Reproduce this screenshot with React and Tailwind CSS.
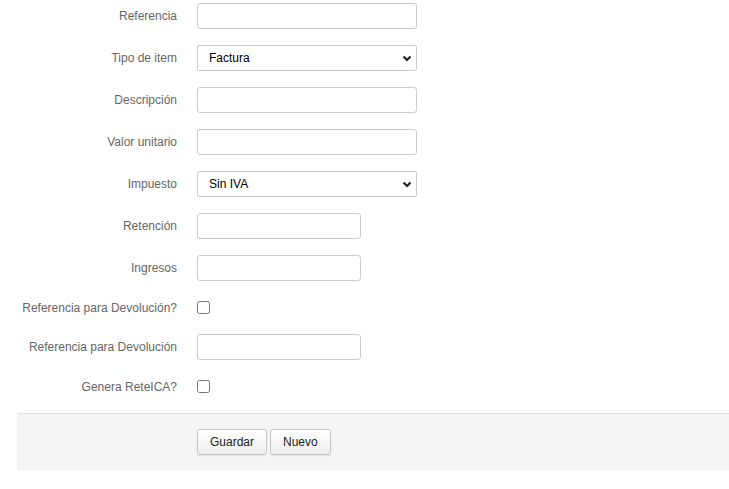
import React from "react";

const font = { fontFamily: '"Liberation Sans", Arial, sans-serif' };

const Label = ({ children }) => (
  <label className="w-[177px] shrink-0 text-right text-[12px] text-[#666]">{children}</label>
);

const TextInput = ({ small }) => (
  <input
    type="text"
    className={
      (small ? "w-[164px]" : "w-[220px]") +
      " h-[26px] rounded-[3px] border border-[#ccc] bg-white px-2 text-[12px] text-black outline-none"
    }
  />
);

const Chevron = () => (
  <svg className="pointer-events-none absolute right-[5px] top-[10px]" width="10" height="7" viewBox="0 0 10 7">
    <path d="M1.5 1.5 L5 5 L8.5 1.5" fill="none" stroke="#222" strokeWidth="2.2" />
  </svg>
);

const Select = ({ value, options }) => (
  <div className="relative">
    <select
      defaultValue={value}
      className="h-[26px] w-[220px] appearance-none rounded-[2px] border border-[#ccc] bg-white pl-[11px] text-[12px] text-black outline-none"
    >
      {options.map((o) => (
        <option key={o}>{o}</option>
      ))}
    </select>
    <Chevron />
  </div>
);

const Row = ({ label, children, h = "h-[26px]" }) => (
  <div className={"mb-4 flex items-center gap-5 " + h}>
    <Label>{label}</Label>
    {children}
  </div>
);

const Check = () => (
  <input type="checkbox" className="m-0 h-[13px] w-[13px]" />
);

const Button = ({ children }) => (
  <button className="h-[26px] rounded-[3px] border border-[#c8c8c8] bg-gradient-to-b from-white to-[#ececec] px-[12px] text-[12px] text-[#222] shadow-[0_1px_1px_rgba(0,0,0,0.08)]">
    {children}
  </button>
);

export default function App() {
  return (
    <div className="min-h-screen bg-white pt-[3px]" style={font}>
      <Row label="Referencia">
        <TextInput />
      </Row>
      <Row label="Tipo de item">
        <Select value="Factura" options={["Factura", "Nota crédito", "Nota débito"]} />
      </Row>
      <Row label="Descripción">
        <TextInput />
      </Row>
      <Row label="Valor unitario">
        <TextInput />
      </Row>
      <Row label="Impuesto">
        <Select value="Sin IVA" options={["Sin IVA", "IVA 5%", "IVA 19%"]} />
      </Row>
      <Row label="Retención">
        <TextInput small />
      </Row>
      <Row label="Ingresos">
        <TextInput small />
      </Row>
      <Row label="Referencia para Devolución?" h="h-[21px]">
        <Check />
      </Row>
      <Row label="Referencia para Devolución">
        <TextInput small />
      </Row>
      <Row label="Genera ReteICA?" h="h-[21px]">
        <Check />
      </Row>
      <div className="ml-[17px] mt-[15px] flex h-[57px] gap-[3px] border-t border-[#e3e3e3] bg-[#f4f4f4] pl-[180px] pt-[15px]">
        <Button>Guardar</Button>
        <Button>Nuevo</Button>
      </div>
    </div>
  );
}
